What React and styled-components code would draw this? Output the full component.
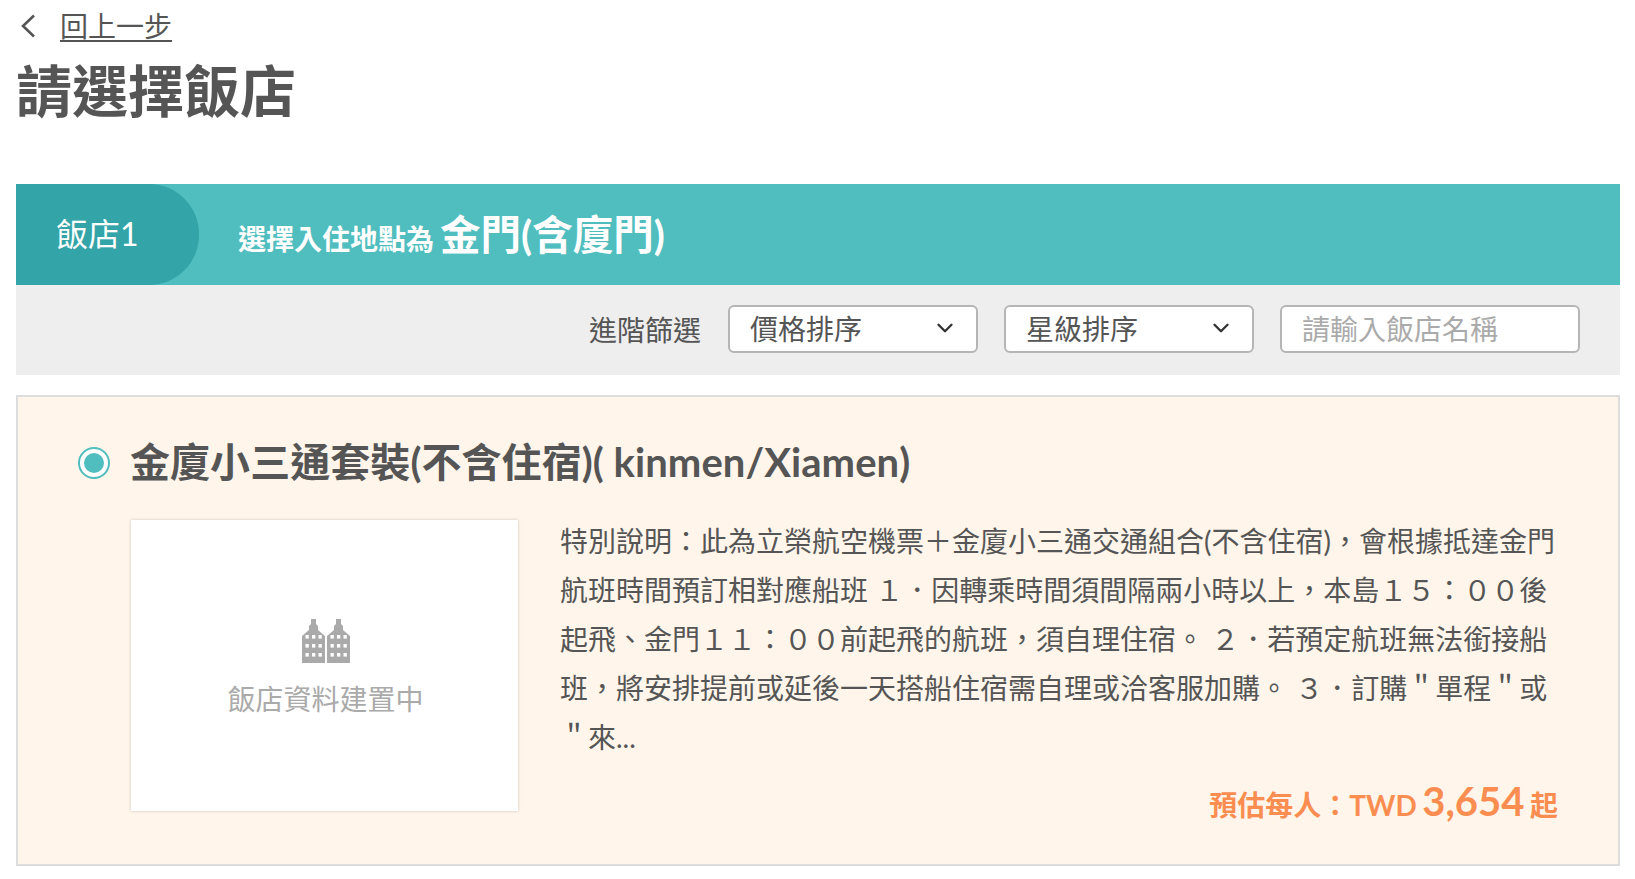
import React from 'react';
import styled, { createGlobalStyle } from 'styled-components';
import { ChevronDown } from 'lucide-react';

const Global = createGlobalStyle`
  * { box-sizing: border-box; }
  body {
    margin: 0;
    background: #fff;
    color: #555;
    font-family: Lato, "Noto Sans CJK TC", sans-serif;
  }
`;

const Page = styled.div`
  padding: 0 15px 0 16px;
`;

const BackRow = styled.div`
  display: flex;
  align-items: center;
  gap: 23px;
  height: 52px;
  padding-left: 4px;
`;

const BackLink = styled.a`
  font-size: 28px;
  line-height: 36px;
  color: #555;
  text-decoration: underline;
  text-underline-offset: 3px;
  text-decoration-thickness: 2px;
`;

const PageTitle = styled.h1`
  margin: 6px 0 60px;
  font-size: 56px;
  line-height: 66px;
  font-weight: 700;
  color: #555;
`;

const HeadBar = styled.div`
  display: flex;
  align-items: center;
  height: 101px;
  background: #50bdbe;
  color: #fff;
`;

const HeadBadge = styled.div`
  display: flex;
  align-items: center;
  width: 183px;
  height: 100%;
  padding: 0 0 5px 40px;
  background: #33a4a7;
  border-radius: 0 50px 50px 0;
  font-size: 32px;
`;

const HeadText = styled.div`
  display: flex;
  align-items: baseline;
  margin: -4px 0 0 39px;
  font-size: 28px;
  font-weight: 700;
`;

const HeadPlace = styled.span`
  margin-left: 6px;
  font-size: 40.5px;
`;

const FilterBar = styled.div`
  display: flex;
  align-items: center;
  justify-content: flex-end;
  gap: 26px;
  height: 90px;
  padding: 0 40px 2px 0;
  background: #eee;
  font-size: 28px;
`;

const FilterLabel = styled.span`
  margin: -1px 1px 0 0;
`;

const Select = styled.div`
  display: flex;
  align-items: center;
  justify-content: space-between;
  width: 250px;
  height: 48px;
  padding: 0 18px 2px 20px;
  background: #fff;
  border: 2px solid #b5b5b5;
  border-radius: 6px;
  color: #555;
`;

const SearchInput = styled.input`
  width: 300px;
  height: 48px;
  padding: 0 20px;
  background: #fff;
  border: 2px solid #b5b5b5;
  border-radius: 6px;
  font: inherit;
  &::placeholder { color: #aaa; opacity: 1; }
`;

const Card = styled.div`
  margin-top: 20px;
  height: 471px;
  padding: 42px 60px 0;
  background: #fff5eb;
  border: 2px solid #ddd;
`;

const CardHead = styled.div`
  display: flex;
  align-items: center;
  gap: 20px;
  height: 48px;
`;

const Radio = styled.span`
  display: flex;
  align-items: center;
  justify-content: center;
  width: 32px;
  height: 32px;
  border: 2px solid #50bdbe;
  border-radius: 50%;
  background: #fff;
  &::after {
    content: "";
    width: 20px;
    height: 20px;
    border-radius: 50%;
    background: #50bdbe;
  }
`;

const CardTitle = styled.h2`
  margin: -3px 0 0;
  font-size: 40px;
  line-height: 48px;
  font-weight: 700;
  letter-spacing: 0.06px;
  color: #555;
`;

const CardBody = styled.div`
  display: flex;
  gap: 42px;
  margin: 33px 0 0 53px;
`;

const Thumb = styled.div`
  display: flex;
  flex-direction: column;
  align-items: center;
  flex: none;
  width: 387px;
  height: 291px;
  padding: 99px 0 0 2px;
  background: #fff;
  box-shadow: 0 0 3px rgba(0, 0, 0, 0.2);
`;

const ThumbText = styled.div`
  margin-top: 16px;
  font-size: 28px;
  line-height: 40px;
  color: #aaa;
`;

const Info = styled.div`
  display: flex;
  flex-direction: column;
  justify-content: space-between;
  flex: 1;
  height: 312px;
  margin-top: -3px;
`;

const Desc = styled.p`
  margin: 0;
  width: 1000px;
  font-size: 28px;
  line-height: 49px;
  color: #555;
`;

const Price = styled.div`
  display: flex;
  align-items: baseline;
  justify-content: flex-end;
  gap: 5.5px;
  padding-right: 2px;
  font-size: 28px;
  line-height: 48px;
  font-weight: 700;
  color: #fb8d50;
`;

const PriceNum = styled.span`
  font-size: 40px;
`;

const BackArrow = () => (
  <svg width="17" height="24" viewBox="0 0 17 24" fill="none" stroke="#555" strokeWidth="2.6">
    <path d="M14 1.5 3 12l11 10.5" />
  </svg>
);

const Houses = () => (
  <svg width="48" height="44" viewBox="0 0 48 44">
    {[0, 25].map((x) => (
      <g key={x} transform={`translate(${x} 0)`} fill="#aaa">
        <path d="M9 0h5v5l2 2v4l7 6v27H0V17l7-6V7l2-2z" />
        <g fill="#fff">
          {[16, 25, 34].map((y) =>
            [3.5, 10, 16.5].map((wx) => <rect key={`${y}-${wx}`} x={wx} y={y} width="3.3" height="3.6" />)
          )}
        </g>
      </g>
    ))}
  </svg>
);

const App = () => (
  <Page>
    <Global />
    <BackRow>
      <BackArrow />
      <BackLink>回上一步</BackLink>
    </BackRow>
    <PageTitle>請選擇飯店</PageTitle>
    <HeadBar>
      <HeadBadge>飯店1</HeadBadge>
      <HeadText>
        選擇入住地點為<HeadPlace>金門(含廈門)</HeadPlace>
      </HeadText>
    </HeadBar>
    <FilterBar>
      <FilterLabel>進階篩選</FilterLabel>
      <Select>
        價格排序
        <ChevronDown size={26} strokeWidth={2.2} color="#333" />
      </Select>
      <Select>
        星級排序
        <ChevronDown size={26} strokeWidth={2.2} color="#333" />
      </Select>
      <SearchInput placeholder="請輸入飯店名稱" />
    </FilterBar>
    <Card>
      <CardHead>
        <Radio />
        <CardTitle>金廈小三通套裝(不含住宿)( kinmen/Xiamen)</CardTitle>
      </CardHead>
      <CardBody>
        <Thumb>
          <Houses />
          <ThumbText>飯店資料建置中</ThumbText>
        </Thumb>
        <Info>
          <Desc>
            特別說明：此為立榮航空機票＋金廈小三通交通組合(不含住宿)，會根據抵達金門航班時間預訂相對應船班 １．因轉乘時間須間隔兩小時以上，本島１５：００後起飛、金門１１：００前起飛的航班，須自理住宿。 ２．若預定航班無法銜接船班，將安排提前或延後一天搭船住宿需自理或洽客服加購。 ３．訂購＂單程＂或＂來...
          </Desc>
          <Price>
            預估每人：TWD <PriceNum>3,654</PriceNum> 起
          </Price>
        </Info>
      </CardBody>
    </Card>
  </Page>
);

export default App;
